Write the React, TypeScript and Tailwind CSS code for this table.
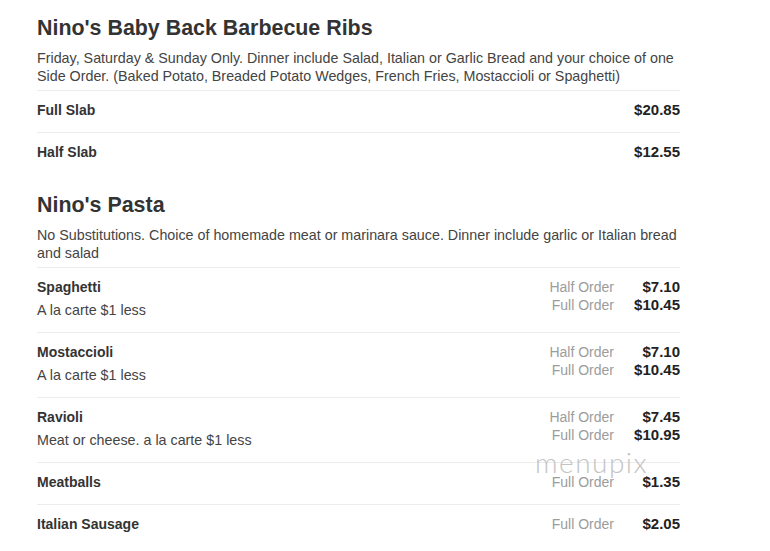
import React from "react";

type Price = { label?: string; price: string };
type Item = { name: string; desc?: string; prices: Price[] };
type Section = { title: string; desc: string; items: Item[] };

const sections: Section[] = [
  {
    title: "Nino's Baby Back Barbecue Ribs",
    desc: "Friday, Saturday & Sunday Only. Dinner include Salad, Italian or Garlic Bread and your choice of one Side Order. (Baked Potato, Breaded Potato Wedges, French Fries, Mostaccioli or Spaghetti)",
    items: [
      { name: "Full Slab", prices: [{ price: "$20.85" }] },
      { name: "Half Slab", prices: [{ price: "$12.55" }] },
    ],
  },
  {
    title: "Nino's Pasta",
    desc: "No Substitutions. Choice of homemade meat or marinara sauce. Dinner include garlic or Italian bread and salad",
    items: [
      {
        name: "Spaghetti",
        desc: "A la carte $1 less",
        prices: [
          { label: "Half Order", price: "$7.10" },
          { label: "Full Order", price: "$10.45" },
        ],
      },
      {
        name: "Mostaccioli",
        desc: "A la carte $1 less",
        prices: [
          { label: "Half Order", price: "$7.10" },
          { label: "Full Order", price: "$10.45" },
        ],
      },
      {
        name: "Ravioli",
        desc: "Meat or cheese. a la carte $1 less",
        prices: [
          { label: "Half Order", price: "$7.45" },
          { label: "Full Order", price: "$10.95" },
        ],
      },
      { name: "Meatballs", prices: [{ label: "Full Order", price: "$1.35" }] },
      { name: "Italian Sausage", prices: [{ label: "Full Order", price: "$2.05" }] },
    ],
  },
];

function Row({ item }: { item: Item }) {
  return (
    <div className="flex items-start justify-between border-t border-[#ececec] pt-[10px] pb-[13px]">
      <div>
        <div className="text-[14px] font-bold leading-[18px] text-[#333]">{item.name}</div>
        {item.desc && (
          <div className="mt-[5px] text-[14.3px] leading-[18px] text-[#444]">{item.desc}</div>
        )}
      </div>
      <div className="grid grid-cols-[auto_66px] content-start">
        {item.prices.map((p, i) => (
          <React.Fragment key={i}>
            <div className="text-right text-[14px] leading-[18px] text-[#9c9c9c]">{p.label ?? ""}</div>
            <div className="text-right text-[15px] font-bold leading-[18px] text-[#222]">{p.price}</div>
          </React.Fragment>
        ))}
      </div>
    </div>
  );
}

function MenuSection({ s, first }: { s: Section; first: boolean }) {
  return (
    <div className={first ? "" : "mt-[18px]"}>
      <h2 className="text-[21.4px] font-bold leading-[26px] text-[#333]">{s.title}</h2>
      <p className="mt-2 mb-[5px] text-[14.3px] leading-[18px] text-[#444]">{s.desc}</p>
      {s.items.map((it) => (
        <Row key={it.name} item={it} />
      ))}
    </div>
  );
}

export default function App() {
  return (
    <div
      className="relative min-h-[551px] w-[770px] bg-white pl-[37px] pt-[15px]"
      style={{ fontFamily: '"Liberation Sans", Arial, sans-serif' }}
    >
      <div className="w-[643px]">
        {sections.map((s, i) => (
          <MenuSection key={s.title} s={s} first={i === 0} />
        ))}
      </div>
      <div
        className="pointer-events-none absolute left-[535px] top-[446px] text-[28px] font-light leading-[32px] tracking-[1.5px] text-[#c4c4c4]"
        style={{ fontFamily: 'Lato, "Open Sans", sans-serif' }}
      >
        menupix
      </div>
    </div>
  );
}
